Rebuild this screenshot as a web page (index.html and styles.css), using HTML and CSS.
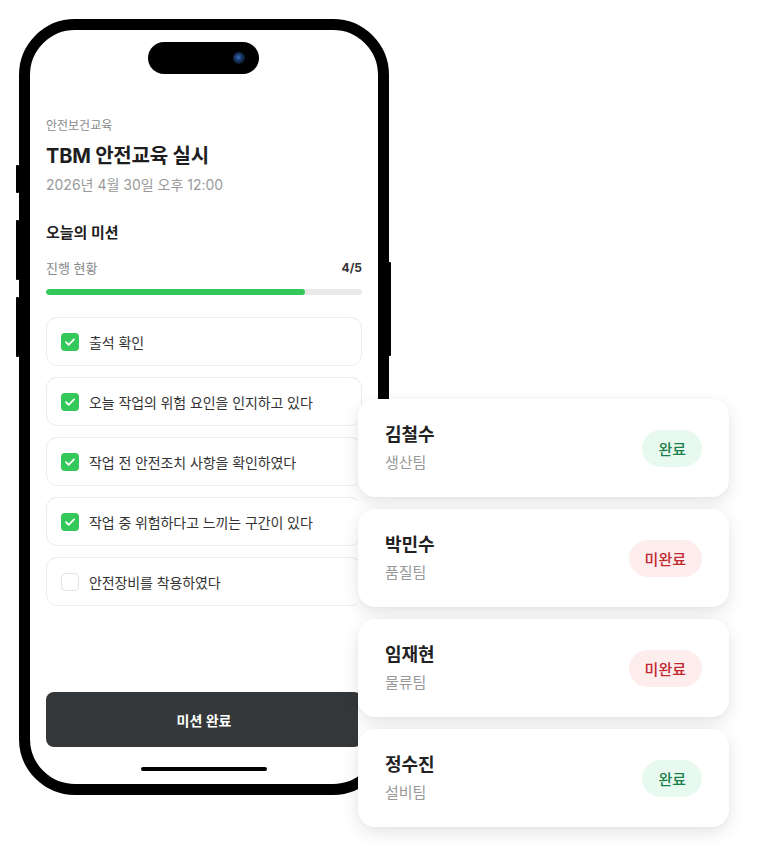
FILE: index.html
```html
<!DOCTYPE html>
<html lang="ko">
<head>
<meta charset="utf-8">
<title>TBM 안전교육 실시</title>
<link rel="stylesheet" href="styles.css">
</head>
<body>
<div class="stage">
  <div class="phone">
    <span class="side-btn side-l1"></span>
    <span class="side-btn side-l2"></span>
    <span class="side-btn side-l3"></span>
    <span class="side-btn side-r1"></span>
    <div class="island"><span class="camera"></span></div>
    <div class="screen">
      <div class="category">안전보건교육</div>
      <h1 class="title">TBM 안전교육 실시</h1>
      <div class="date">2026년 4월 30일 오후 12:00</div>
      <h2 class="section">오늘의 미션</h2>
      <div class="progress-head">
        <span class="progress-label">진행 현황</span>
        <span class="progress-count">4/5</span>
      </div>
      <div class="progress-track"><div class="progress-fill" style="width:82%"></div></div>
      <ul class="checklist">
        <li class="check-item"><span class="box checked"><svg viewBox="0 0 18 18" width="18" height="18"><path d="M5 9.2l2.7 2.7L13 6.4" fill="none" stroke="#fff" stroke-width="1.8" stroke-linecap="round" stroke-linejoin="round"/></svg></span><span class="check-text">출석 확인</span></li>
        <li class="check-item"><span class="box checked"><svg viewBox="0 0 18 18" width="18" height="18"><path d="M5 9.2l2.7 2.7L13 6.4" fill="none" stroke="#fff" stroke-width="1.8" stroke-linecap="round" stroke-linejoin="round"/></svg></span><span class="check-text">오늘 작업의 위험 요인을 인지하고 있다</span></li>
        <li class="check-item"><span class="box checked"><svg viewBox="0 0 18 18" width="18" height="18"><path d="M5 9.2l2.7 2.7L13 6.4" fill="none" stroke="#fff" stroke-width="1.8" stroke-linecap="round" stroke-linejoin="round"/></svg></span><span class="check-text">작업 전 안전조치 사항을 확인하였다</span></li>
        <li class="check-item"><span class="box checked"><svg viewBox="0 0 18 18" width="18" height="18"><path d="M5 9.2l2.7 2.7L13 6.4" fill="none" stroke="#fff" stroke-width="1.8" stroke-linecap="round" stroke-linejoin="round"/></svg></span><span class="check-text">작업 중 위험하다고 느끼는 구간이 있다</span></li>
        <li class="check-item"><span class="box"></span><span class="check-text">안전장비를 착용하였다</span></li>
      </ul>
      <button class="complete-btn">미션 완료</button>
      <div class="home-indicator"></div>
    </div>
  </div>

  <div class="cards">
    <div class="card">
      <div class="person"><div class="name">김철수</div><div class="team">생산팀</div></div>
      <span class="badge done">완료</span>
    </div>
    <div class="card">
      <div class="person"><div class="name">박민수</div><div class="team">품질팀</div></div>
      <span class="badge todo">미완료</span>
    </div>
    <div class="card">
      <div class="person"><div class="name">임재현</div><div class="team">물류팀</div></div>
      <span class="badge todo">미완료</span>
    </div>
    <div class="card">
      <div class="person"><div class="name">정수진</div><div class="team">설비팀</div></div>
      <span class="badge done">완료</span>
    </div>
  </div>
</div>
</body>
</html>
```
FILE: styles.css
```css
* { box-sizing: border-box; }
html, body {
  margin: 0;
  padding: 0;
  background: #ffffff;
}
body {
  font-family: Inter, "Noto Sans CJK KR", sans-serif;
  color: #222;
}
.stage {
  position: relative;
  width: 757px;
  height: 858px;
  padding: 19px 0 0 19px;
}
.phone {
  position: relative;
  width: 370px;
  height: 776px;
  border: 11px solid #000;
  border-radius: 56px;
  background: #fff;
}
.side-btn {
  position: absolute;
  width: 3px;
  background: #000;
  border-radius: 1px;
}
.side-l1 { left: -14px; top: 135px; height: 28px; }
.side-l2 { left: -14px; top: 190px; height: 60px; }
.side-l3 { left: -14px; top: 267px; height: 60px; }
.side-r1 { right: -13px; top: 232px; height: 94px; }
.island {
  position: absolute;
  top: 12px;
  left: 118px;
  width: 111px;
  height: 32px;
  border-radius: 16px;
  background: #000;
}
.camera {
  position: absolute;
  top: 10px;
  right: 14px;
  width: 12px;
  height: 12px;
  border-radius: 50%;
  background: radial-gradient(circle at 45% 45%, #3a6fc0 0, #1a3766 35%, #0b1424 75%);
}
.screen {
  display: flex;
  flex-direction: column;
  height: 100%;
  padding: 87px 16px 13px 16px;
}
.category {
  font-size: 12px;
  line-height: 17px;
  color: #8a8a8a;
}
.title {
  margin: 8px 0 0;
  font-size: 20px;
  line-height: 28px;
  font-weight: 700;
  color: #1e1e1e;
  letter-spacing: -0.2px;
}
.date {
  margin-top: 5px;
  font-size: 14px;
  line-height: 20px;
  color: #9a9a9a;
}
.section {
  margin: 27px 0 0;
  font-size: 15px;
  line-height: 22px;
  font-weight: 700;
  color: #1e1e1e;
}
.progress-head {
  margin-top: 15px;
  display: flex;
  justify-content: space-between;
  align-items: center;
  line-height: 18px;
}
.progress-label { font-size: 13px; color: #888; }
.progress-count { font-size: 12px; font-weight: 700; color: #333; }
.progress-track {
  margin-top: 12px;
  height: 6px;
  border-radius: 3px;
  background: #e9e9ec;
  overflow: hidden;
}
.progress-fill {
  height: 100%;
  border-radius: 3px;
  background: #34c759;
}
.checklist {
  list-style: none;
  margin: 22px 0 0;
  padding: 0;
  display: flex;
  flex-direction: column;
  gap: 11px;
}
.check-item {
  display: flex;
  align-items: center;
  height: 49px;
  padding: 0 14px;
  border: 1px solid #ececec;
  border-radius: 11px;
  background: #fff;
}
.box {
  flex: none;
  width: 18px;
  height: 18px;
  border-radius: 4px;
  border: 1px solid #e3e3e3;
  background: #fff;
  display: flex;
}
.box.checked {
  border: none;
  background: #34c759;
}
.check-text {
  margin-left: 10px;
  font-size: 14px;
  color: #333;
  letter-spacing: -0.1px;
}
.complete-btn {
  margin-top: auto;
  height: 55px;
  border: none;
  border-radius: 8px;
  background: #35383a;
  color: #fff;
  font-family: inherit;
  font-size: 14px;
  font-weight: 700;
}
.home-indicator {
  margin: 20px auto 0;
  width: 126px;
  height: 4px;
  border-radius: 2px;
  background: #000;
}
.cards {
  position: absolute;
  left: 358px;
  top: 399px;
  width: 371px;
  display: flex;
  flex-direction: column;
  gap: 12px;
  background: #fff;
  border-radius: 17px;
}
.card {
  height: 98px;
  border-radius: 17px;
  background: #fff;
  box-shadow: 0 6px 18px rgba(0, 0, 0, 0.10), 0 1px 4px rgba(0, 0, 0, 0.03);
  display: flex;
  align-items: center;
  justify-content: space-between;
  padding: 0 27px;
}
.person { display: flex; flex-direction: column; }
.name {
  font-size: 18px;
  line-height: 26px;
  font-weight: 700;
  color: #222;
}
.team {
  margin-top: 4px;
  font-size: 15px;
  line-height: 22px;
  color: #9a9a9a;
}
.badge {
  height: 37px;
  padding: 0 16px;
  border-radius: 19px;
  display: flex;
  align-items: center;
  font-size: 15px;
  font-weight: 500;
}
.badge.done { background: #e8faf0; color: #1b7f4b; }
.badge.todo { background: #fdeded; color: #c3272e; }
```
